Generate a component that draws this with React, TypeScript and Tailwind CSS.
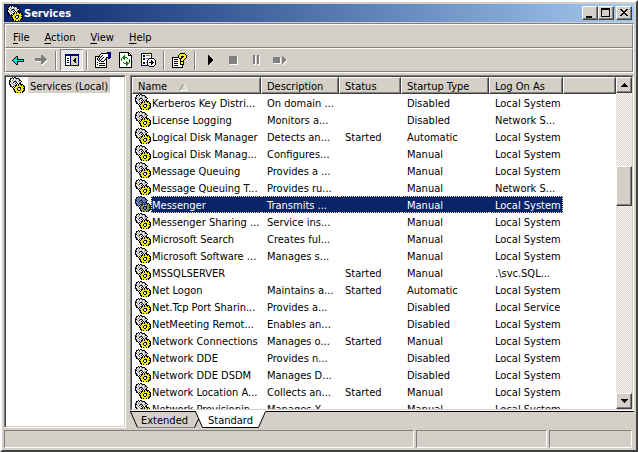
import { useState } from "react";
import type { ReactNode } from "react";

const SERVICES = [
  ["Kerberos Key Distri...", "On domain ...", "", "Disabled", "Local System"],
  ["License Logging", "Monitors a...", "", "Disabled", "Network S..."],
  ["Logical Disk Manager", "Detects an...", "Started", "Automatic", "Local System"],
  ["Logical Disk Manag...", "Configures...", "", "Manual", "Local System"],
  ["Message Queuing", "Provides a ...", "", "Manual", "Local System"],
  ["Message Queuing T...", "Provides ru...", "", "Manual", "Network S..."],
  ["Messenger", "Transmits ...", "", "Manual", "Local System"],
  ["Messenger Sharing ...", "Service ins...", "", "Manual", "Local System"],
  ["Microsoft Search", "Creates ful...", "", "Manual", "Local System"],
  ["Microsoft Software ...", "Manages s...", "", "Manual", "Local System"],
  ["MSSQLSERVER", "", "Started", "Manual", ".\\svc.SQL..."],
  ["Net Logon", "Maintains a...", "Started", "Automatic", "Local System"],
  ["Net.Tcp Port Sharin...", "Provides a...", "", "Disabled", "Local Service"],
  ["NetMeeting Remot...", "Enables an...", "", "Disabled", "Local System"],
  ["Network Connections", "Manages o...", "Started", "Manual", "Local System"],
  ["Network DDE", "Provides n...", "", "Disabled", "Local System"],
  ["Network DDE DSDM", "Manages D...", "", "Disabled", "Local System"],
  ["Network Location A...", "Collects an...", "Started", "Manual", "Local System"],
  ["Network Provisionin...", "Manages X...", "", "Manual", "Local System"],
];

const COLUMNS = ["Name", "Description", "Status", "Startup Type", "Log On As"];

const GEARS = [
  "...K.KK.........",
  ".KKWKWGKKK......",
  ".KWWGWWGWGK.....",
  "KGWGWWGWWWKK....",
  "KKWWGKKGWGWWK...",
  "KWGWKWWKWWGK....",
  "KWWGWWKWKWKK....",
  "KKWWGWWKYKYKKK..",
  ".KGWWGKKYKYYKYK.",
  ".KKWKWKYYYYYYYKK",
  "...K.KYYYKKKYYYK",
  "....KYYYKWWKYYKK",
  "....KKYYKWWKYYYK",
  ".....KYYYKKYYYKK",
  ".....KKYYYYYYKK.",
  "......KYKYYKYK..",
];

const GEAR_COLORS: Record<string, string> = { K: "#000000", W: "#e8e8e8", G: "#909090", Y: "#f0e800" };
const GEAR_COLORS_SELECTED: Record<string, string> = { K: "#05143a", W: "#6f82a8", G: "#45587e", Y: "#858f38" };

const BACK = [
  ".....KK.......",
  "....KCK.......",
  "...KCCK.......",
  "..KCCCKKKKKKK.",
  ".KCCCCCCCCCCK.",
  "..KCCCKKKKKKK.",
  "...KCCK.......",
  "....KCK.......",
  ".....KK.......",
];

const FORWARD = [
  ".......GG.....",
  ".......GGG....",
  ".......GGGG...",
  ".GGGGGGGGGGG..",
  ".GGGGGGGGGGGG.",
  ".GGGGGGGGGGGWW",
  "..WWWWWGGGGWW.",
  ".......GGGWW..",
  ".......GGWW...",
  "........WW....",
];

const PANE = [
  "BBBBBBBBBBBBBB",
  "BBBBBBBBBBBBBB",
  "BWWWWBLLLLLLLB",
  "BWWWWBLLLLLLLB",
  "BWKKWBLLLLKLLB",
  "BWWWWBLLLKKLLB",
  "BWKKWBLLKKKLLB",
  "BWWWWBLLLKKLLB",
  "BWKKWBLLLLKLLB",
  "BWWWWBLLLLLLLB",
  "BWWWWBLLLLLLLB",
  "BBBBBBBBBBBBBB",
];

const PROPERTIES = [
  "............BBBB",
  "......KKKKKKBBBB",
  ".....KWWLWWWWBBB",
  "....KWLKWWWWWBBB",
  "KKKKKLKWWLWWWBBB",
  "KWWKWKWLKWWKKBBB",
  "KWKWKWLKWWLK.BB.",
  "KWKLKLKWWLKK....",
  "KWWKWKLWLKWK....",
  "KWWWKWKKKWWK....",
  "KWKWWWWWWWWK....",
  "KWWWKKKKKKWK....",
  "KWKWWWWWWWWK....",
  "KWWWKKKKKKWK....",
  "KWWWWWWWWWWK....",
  "KKKKKKKKKKKK....",
];

const REFRESH = [
  "KKKKKKKKKK...",
  "KWWWWWWWWKK..",
  "KWWWWWWWWKWK.",
  "KWWWWGWWWKKKK",
  "KWWWGGWWWWWWK",
  "KWWGGGGGWWWWK",
  "KWGWGGWWGWWWK",
  "KWGWWGWWWWGWK",
  "KWGWWWWWWWGWK",
  "KWWWWWWGWWGWK",
  "KWWWGWWGGWGWK",
  "KWWWWGGGGGWWK",
  "KWWWWWWGGWWWK",
  "KWWWWWWGWWWWK",
  "KWWWWWWWWWWWK",
  "KKKKKKKKKKKKK",
];

const EXPORT = [
  "BBBBBBBBBBB.....",
  "BWWWWWWWWWB.....",
  "BWBBWGGGGWB.....",
  "BWBBWWWWWWB.....",
  "BWWWWWWWWWB.....",
  "BWBBWGGGKKKKK...",
  "BWBBWWWKWWWWWK..",
  "BWWWWWKWWWKWWWK.",
  "BWWWWWKWWWKKWWK.",
  "BWBBWGKWKKKKKWK.",
  "BWBBWWKWWWKKWWK.",
  "BWWWWWKWWWKWWWK.",
  "BBBBBBBKWWWWWK..",
  "........KKKKK...",
];

const HELP = [
  "........KKKKK..",
  ".......KYYYYYK.",
  "......KYYYYYYYK",
  "......KYYKKKYYK",
  "KKKKKKKYYKKYYYK",
  "KWWWWWWKKKYYYK.",
  "KWKKKKWWKYYYK..",
  "KWWWWWWWKYYK...",
  "KWKKKKWWKKKK...",
  "KWWWWWWWKYYK...",
  "KWKKKKWWKYYK...",
  "KWWWWWWWKKKK...",
  "KWKKKKWWWWK....",
  "KWWWWWWWWWK....",
  "KKKKKKKKKKK....",
];

const ICON_COLORS: Record<string, string> = {
  K: "#000000",
  W: "#ffffff",
  G: "#808080",
  Y: "#ffff00",
  C: "#00e5e5",
  B: "#000080",
  L: "#d4d0c8",
};

type PixelsProps = { rows: string[]; colors?: Record<string, string>; className?: string };

// one svg unit per pixel
function Pixels({ rows, colors = ICON_COLORS, className = "" }: PixelsProps) {
  return (
    <svg
      width={rows[0].length}
      height={rows.length}
      shapeRendering="crispEdges"
      aria-hidden="true"
      className={`shrink-0 ${className}`}
    >
      {rows.flatMap((row, y) =>
        [...row].map((c, x) =>
          c === "." ? null : <rect key={`${x}-${y}`} x={x} y={y} width="1" height="1" fill={colors[c]} />
        )
      )}
    </svg>
  );
}

function ToolButton({ label, children }: { label: string; children: ReactNode }) {
  return (
    <button type="button" aria-label={label} className="flex h-[23px] w-[23px] items-center justify-center">
      {children}
    </button>
  );
}

function Separator() {
  return <span className="mx-[3px] h-[19px] w-[2px] border-l border-r border-l-[#808080] border-r-white" />;
}

const RAISED =
  "border border-t-white border-l-white border-r-[#404040] border-b-[#404040] bg-[#d4d0c8] shadow-[inset_-1px_-1px_0_#808080]";

const SUNKEN = "border border-t-[#808080] border-l-[#808080] border-r-white border-b-white";

function CaptionButton({ label, children }: { label: string; children: ReactNode }) {
  return (
    <button type="button" aria-label={label} className={`h-[14px] w-4 ${RAISED}`}>
      <svg width="14" height="12" shapeRendering="crispEdges" aria-hidden="true">
        {children}
      </svg>
    </button>
  );
}

function MenuItem({ label }: { label: string }) {
  return (
    <button type="button" className="pt-[3px] pr-2 pl-[7px]">
      <span className="underline underline-offset-2">{label[0]}</span>
      {label.slice(1)}
    </button>
  );
}

function ScrollBar() {
  return (
    <div className="flex w-4 shrink-0 flex-col bg-[repeating-conic-gradient(#ffffff_0_25%,#d4d0c8_0_50%)] bg-size-[2px_2px]">
      <button type="button" aria-label="Scroll up" className={`flex h-4 items-center justify-center ${RAISED}`}>
        <svg width="7" height="4" shapeRendering="crispEdges" aria-hidden="true">
          <path d="M3 0h1v1h1v1h1v1h1v1H0V3h1V2h1V1h1z" />
        </svg>
      </button>
      <div className="grow-[73]" />
      <div className={`h-10 ${RAISED}`} />
      <div className="grow-[187]" />
      <button type="button" aria-label="Scroll down" className={`flex h-4 items-center justify-center ${RAISED}`}>
        <svg width="7" height="4" shapeRendering="crispEdges" aria-hidden="true">
          <path d="M0 0h7v1H6v1H5v1H4v1H3V3H2V2H1V1H0z" />
        </svg>
      </button>
    </div>
  );
}

function ServiceTable() {
  const [selected, setSelected] = useState("Messenger");

  return (
    <table className="w-full table-fixed border-separate border-spacing-0 whitespace-nowrap">
      <colgroup>
        <col className="w-[129px]" />
        <col className="w-[78px]" />
        <col className="w-[62px]" />
        <col className="w-[88px]" />
        <col className="w-[74px]" />
        <col />
      </colgroup>
      <thead>
        <tr>
          {COLUMNS.map((name) => (
            <th key={name} className={`h-[17px] p-0 text-left font-normal ${RAISED}`}>
              <span className="flex items-center gap-3 pt-[2px] pl-[5px] leading-[13px]">
                {name}
                {name === "Name" && (
                  <svg width="9" height="8" fill="none" aria-hidden="true">
                    <path d="M4.5 .5L.5 7.5" stroke="#808080" />
                    <path d="M4.5 .5L8.5 7.5H.5" stroke="#fff" />
                  </svg>
                )}
              </span>
            </th>
          ))}
          <td className={`p-0 ${RAISED}`} />
        </tr>
      </thead>
      <tbody>
        {SERVICES.map(([name, ...rest]) => {
          const on = name === selected;
          const tone = on ? "bg-[#0a246a] text-white border-[#f5db95]" : "border-transparent";
          return (
            <tr key={name} onClick={() => setSelected(name)}>
              <td className="h-[17px] p-0">
                <span className="flex pl-[3px]">
                  <Pixels rows={GEARS} colors={on ? GEAR_COLORS_SELECTED : GEAR_COLORS} />
                  <span className={`h-[17px] grow border-y border-l border-dotted pt-[2px] leading-[13px] ${tone}`}>
                    {name}
                  </span>
                </span>
              </td>
              {rest.map((text, i) => (
                <td
                  key={i}
                  className={`border-y border-dotted p-0 pt-[2px] pl-[6px] leading-[13px] last-of-type:border-r ${tone}`}
                >
                  {text}
                </td>
              ))}
            </tr>
          );
        })}
      </tbody>
    </table>
  );
}

function ViewTabs() {
  return (
    <div className="flex h-[17px] shrink-0 items-start">
      <svg width="8" height="17" aria-hidden="true">
        <path d="M0 .5H8" stroke="#000" />
        <path d="M.5 .5L7.5 16.5" stroke="#000" fill="none" />
      </svg>
      <button
        type="button"
        className="h-[17px] border-t border-b border-t-black border-b-[#808080] px-[3px] pt-[2px] leading-[13px]"
      >
        Extended
      </button>
      <svg width="14" height="17" aria-hidden="true">
        <path d="M4.5 .5L11.5 16.5H14V0H4z" fill="#fff" />
        <path d="M0 .5H5M4.5 .5L11.5 16.5H14" stroke="#000" fill="none" />
        <path d="M0 16.5H3.5" stroke="#808080" />
        <path d="M3.5 16.5L7.5 8" stroke="#000" />
      </svg>
      <button
        type="button"
        className="h-[17px] border-t border-b border-t-white border-b-black bg-white px-[3px] pt-[2px] leading-[13px]"
      >
        Standard
      </button>
      <svg width="10" height="17" aria-hidden="true">
        <path d="M0 0H9.5L2.5 16.5H0z" fill="#fff" />
        <path d="M0 16.5H2.5L9.5 .5" stroke="#000" fill="none" />
      </svg>
      <span className="h-px grow bg-black" />
    </div>
  );
}

export default function App() {
  return (
    <div className="flex h-screen flex-col border-2 border-t-white border-r-[#404040] border-b-[#404040] border-l-white bg-[#d4d0c8] p-[2px] font-['Tahoma','DejaVu_Sans_Condensed','Noto_Sans',sans-serif] text-[11px] leading-4 text-black">
      <header className="flex h-[18px] shrink-0 items-center bg-linear-to-r from-[#0a246a] to-[#a6caf0] pr-[2px] pl-[3px] text-white">
        <Pixels rows={GEARS} colors={GEAR_COLORS} />
        <h1 className="grow pt-[2px] pl-px font-bold">Services</h1>
        <CaptionButton label="Minimize">
          <path d="M3 9h6v2H3z" />
        </CaptionButton>
        <CaptionButton label="Maximize">
          <path fillRule="evenodd" d="M2 1h9v9H2zM3 3v6h7V3z" />
        </CaptionButton>
        <span className="w-[2px]" />
        <CaptionButton label="Close">
          <path d="M3 2h2v1h1v1h2V3h1V2h2v1h-1v1H9v1H8v1h1v1h1v1h1v1H9V8H8V7H6v1H5v1H3V8h1V7h1V6h1V5H5V4H4V3H3z" />
        </CaptionButton>
      </header>

      <div className="mt-px shrink-0 border border-t-[#808080] border-r-white border-b-white border-l-[#808080]">
        <nav className="flex h-[24px] items-center border border-t-white border-r-[#808080] border-b-[#808080] border-l-white">
          <MenuItem label="File" />
          <MenuItem label="Action" />
          <MenuItem label="View" />
          <MenuItem label="Help" />
        </nav>
        <div className="flex h-[24px] items-center border border-t-white border-r-[#808080] border-b-[#808080] border-l-white">
          <ToolButton label="Back">
            <Pixels rows={BACK} />
          </ToolButton>
          <ToolButton label="Forward">
            <Pixels rows={FORWARD} />
          </ToolButton>
          <Separator />
          <button
            type="button"
            aria-label="Show/Hide console tree"
            aria-pressed="true"
            className={`flex h-[22px] w-[23px] items-center justify-center bg-[repeating-conic-gradient(#ffffff_0_25%,#d4d0c8_0_50%)] bg-size-[2px_2px] ${SUNKEN}`}
          >
            <Pixels rows={PANE} />
          </button>
          <Separator />
          <ToolButton label="Properties">
            <Pixels rows={PROPERTIES} />
          </ToolButton>
          <ToolButton label="Refresh">
            <Pixels rows={REFRESH} colors={{ ...ICON_COLORS, G: "#008000" }} />
          </ToolButton>
          <ToolButton label="Export list">
            <Pixels rows={EXPORT} />
          </ToolButton>
          <Separator />
          <ToolButton label="Help">
            <Pixels rows={HELP} />
          </ToolButton>
          <Separator />
          <ToolButton label="Start service">
            <svg width="6" height="10" shapeRendering="crispEdges" aria-hidden="true">
              <path d="M0 0h1v1h1v1h1v1h1v1h1v2H4v1H3v1H2v1H1v1H0z" />
            </svg>
          </ToolButton>
          <ToolButton label="Stop service">
            <svg width="9" height="9" aria-hidden="true">
              <path d="M1 1h8v8H1z" fill="#fff" />
              <path d="M0 0h8v8H0z" fill="#808080" />
            </svg>
          </ToolButton>
          <ToolButton label="Pause service">
            <svg width="7" height="10" aria-hidden="true">
              <path d="M1 1h2v9H1zM5 1h2v9H5z" fill="#fff" />
              <path d="M0 0h2v9H0zM4 0h2v9H4z" fill="#808080" />
            </svg>
          </ToolButton>
          <ToolButton label="Restart service">
            <svg width="14" height="9" shapeRendering="crispEdges" aria-hidden="true">
              <path d="M1 2h7v6H1zM10 1l4 4-4 4z" fill="#fff" />
              <path d="M0 1h7v6H0zM9 0h1v1h1v1h1v1h1v2h-1v1h-1v1h-1v1H9z" fill="#808080" />
            </svg>
          </ToolButton>
        </div>
      </div>

      <main className="mt-[2px] flex min-h-0 grow gap-1">
        <aside className={`w-[122px] shrink-0 bg-white ${SUNKEN}`}>
          <div className="flex h-full items-start border border-t-[#404040] border-r-[#d4d0c8] border-b-[#d4d0c8] border-l-[#404040] pl-[3px]">
            <Pixels rows={GEARS} colors={GEAR_COLORS} />
            <a href="#local" className="ml-[3px] bg-[#d4d0c8] px-[2px] pt-[3px] leading-[13px]">
              Services (Local)
            </a>
          </div>
        </aside>

        <section className="flex min-w-0 grow flex-col">
          <div className={`flex min-h-0 grow bg-white ${SUNKEN}`}>
            <div className="flex min-w-0 grow border border-t-[#404040] border-r-[#d4d0c8] border-b-[#d4d0c8] border-l-[#404040]">
              <div className="min-w-0 grow overflow-hidden">
                <ServiceTable />
              </div>
              <ScrollBar />
            </div>
          </div>
          <ViewTabs />
        </section>
      </main>

      <footer className="mt-[2px] flex h-[18px] shrink-0 gap-[2px] pr-[2px]">
        <div className={`grow ${SUNKEN}`} />
        <div className={`w-[131px] ${SUNKEN}`} />
        <div className={`w-[83px] ${SUNKEN}`} />
      </footer>
    </div>
  );
}
